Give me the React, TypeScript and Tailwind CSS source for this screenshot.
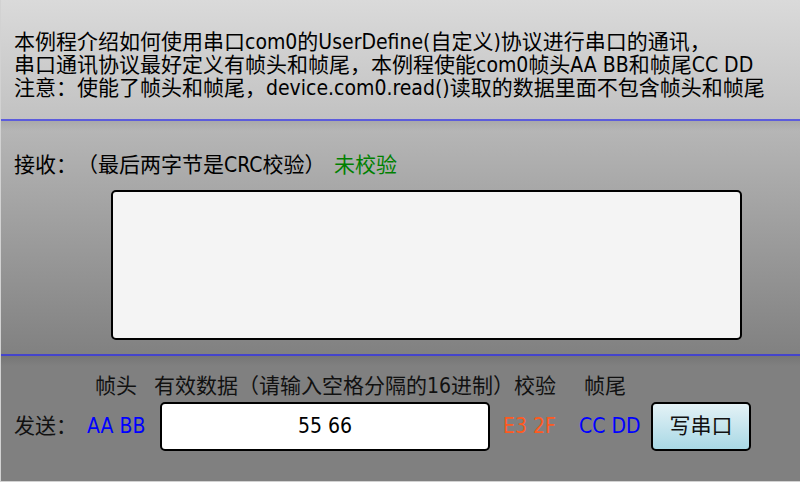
import React from "react";

const font = {
  fontFamily: '"DejaVu Sans Condensed", "Liberation Sans", "Noto Sans CJK SC", sans-serif',
};

export default function App() {
  return (
    <div
      className="w-[800px] h-[482px] flex flex-col border-l border-b border-[#d2d2d2] text-black text-[21px] leading-[23px] overflow-hidden whitespace-nowrap [text-spacing-trim:space-all]"
      style={font}
    >
      <div className="h-[119px] bg-gradient-to-b from-[#dadada] to-[#c2c2c2] pt-[31px] pl-[13px]">
        <div>本例程介绍如何使用串口com0的UserDefine(自定义)协议进行串口的通讯，</div>
        <div>串口通讯协议最好定义有帧头和帧尾，本例程使能com0帧头AA BB和帧尾CC DD</div>
        <div>注意：使能了帧头和帧尾，device.com0.read()读取的数据里面不包含帧头和帧尾</div>
      </div>
      <div className="h-[2px] bg-[#5c5cdc]" />
      <div className="relative h-[233px] bg-gradient-to-b from-[#b8b8b8] to-[#818181] pt-[33px]">
        <div className="absolute top-0 left-0 right-0 h-[10px] bg-gradient-to-b from-[#a9a9a9] to-transparent" />
        <div className="relative flex pl-[13px]">
          <span className="w-[320px]">接收：（最后两字节是CRC校验）</span>
          <span className="text-[#008000]">未校验</span>
        </div>
        <div className="relative ml-[110px] mt-[13px] w-[631px] h-[150px] bg-[#f4f4f4] border-2 border-black rounded-[5px]" />
      </div>
      <div className="h-[2px] bg-[#4444cc]" />
      <div className="relative flex-1 bg-[#808080] pt-[19px]">
        <div className="absolute top-0 left-0 right-0 h-[10px] bg-gradient-to-b from-[#767676] to-transparent" />
        <div className="relative flex pl-[94px] text-[#111]">
          <span className="w-[59px]">帧头</span>
          <span className="w-[360px]">有效数据（请输入空格分隔的16进制）</span>
          <span className="w-[70px]">校验</span>
          <span>帧尾</span>
        </div>
        <div className="relative flex items-center mt-[4px] h-[49px] pl-[13px]">
          <span className="w-[73px] text-[#111]">发送：</span>
          <span className="w-[73px] text-[#0000ff]">AA BB</span>
          <div className="w-[330px] h-[49px] bg-white border-2 border-black rounded-[5px] flex items-center justify-center">
            55 66
          </div>
          <span className="ml-[13px] w-[76px] text-[#ff5a1e]">E3 2F</span>
          <span className="w-[72px] text-[#0000ff]">CC DD</span>
          <button className="w-[100px] h-[49px] border-2 border-black rounded-[5px] bg-gradient-to-b from-[#e4f2f6] to-[#a8d8e5] flex items-center justify-center text-[#111]">
            写串口
          </button>
        </div>
      </div>
    </div>
  );
}
